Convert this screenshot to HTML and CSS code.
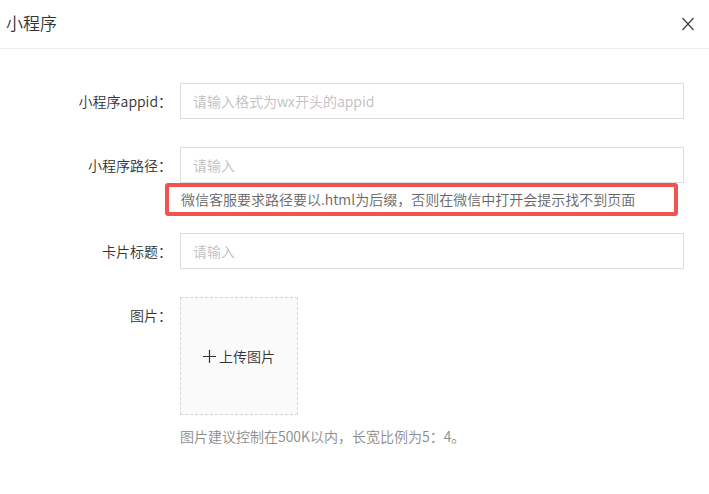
FILE: index.html
```html
<!DOCTYPE html>
<html lang="zh-CN">
<head>
<meta charset="utf-8">
<title>小程序</title>
<link rel="stylesheet" href="styles.css">
</head>
<body>
<div class="dialog">
  <div class="header">
    <span class="title">小程序</span>
    <span class="close">
      <svg width="14" height="14" viewBox="0 0 14 14"><path d="M1.5 1 L12.5 13 M12.5 1 L1.5 13" stroke="#444" stroke-width="1.3" fill="none"/></svg>
    </span>
  </div>
  <div class="form">
    <div class="row">
      <label class="label">小程序appid：</label>
      <input class="input" type="text" placeholder="请输入格式为wx开头的appid">
    </div>
    <div class="row row-tight">
      <label class="label">小程序路径：</label>
      <input class="input" type="text" placeholder="请输入">
    </div>
    <div class="help-row">
      <div class="help-box">微信客服要求路径要以.html为后缀，否则在微信中打开会提示找不到页面</div>
    </div>
    <div class="row">
      <label class="label">卡片标题：</label>
      <input class="input" type="text" placeholder="请输入">
    </div>
    <div class="row row-top">
      <label class="label">图片：</label>
      <div class="upload">
        <svg class="plus" width="13" height="13" viewBox="0 0 13 13"><path d="M6.5 0 V13 M0 6.5 H13" stroke="#333" stroke-width="1.2" fill="none"/></svg>
        <span>上传图片</span>
      </div>
    </div>
    <div class="tip">图片建议控制在500K以内，长宽比例为5：4。</div>
  </div>
</div>
</body>
</html>
```
FILE: styles.css
```css
* { box-sizing: border-box; }
html, body { margin: 0; padding: 0; background: #fff; }
body {
  font-family: "Noto Sans CJK SC", sans-serif;
  font-size: 14px;
  font-weight: 350;
  color: #333;
}
.dialog { width: 709px; height: 494px; }
.header {
  height: 49px;
  border-bottom: 1px solid #eee;
  display: flex;
  align-items: center;
  justify-content: space-between;
  padding: 0 14px 3px 6px;
}
.title { font-size: 17px; color: #333; line-height: 22px; }
.close { display: flex; width: 14px; height: 14px; margin-top: 2px; }
.form { padding-top: 34px; }
.row {
  display: flex;
  align-items: center;
  margin-bottom: 28px;
}
.row-tight { margin-bottom: 0; }
.row-top { align-items: flex-start; margin-bottom: 0; }
.label {
  width: 172px;
  margin-right: 8px;
  text-align: right;
  line-height: 36px;
  color: #333;
  flex: none;
}
.input {
  width: 504px;
  height: 36px;
  border: 1px solid #dcdcdc;
  padding: 0 12px;
  font-family: inherit;
  font-size: 14px;
  font-weight: 350;
  color: #333;
  outline: none;
  border-radius: 0;
  margin: 0;
}
.input::placeholder { color: #c0c0c0; }
.help-row { padding-left: 165px; margin-bottom: 17px; }
.help-box {
  width: 513px;
  height: 33px;
  border: 4px solid #f45252;
  border-radius: 3px;
  padding-left: 12px;
  line-height: 25px;
  color: #666;
  white-space: nowrap;
}
.upload {
  width: 118px;
  height: 118px;
  border: 1px dashed #d6d6d6;
  background: #fafafa;
  display: flex;
  align-items: center;
  justify-content: center;
  gap: 2px;
  color: #333;
  font-size: 14px;
}
.plus { margin-right: 1px; }
.tip {
  margin-left: 180px;
  margin-top: 11px;
  line-height: 20px;
  color: #8c8c8c;
}
```
